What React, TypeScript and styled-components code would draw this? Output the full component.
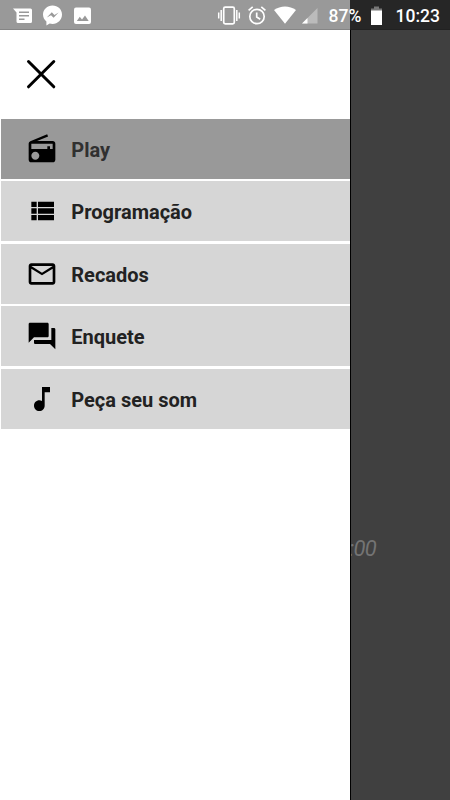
import React from "react";
import styled, { createGlobalStyle } from "styled-components";

const GlobalStyle = createGlobalStyle`
  * { box-sizing: border-box; }
  body { margin: 0; background: #404040; font-family: Roboto, "Liberation Sans", sans-serif; }
`;

const Screen = styled.div`
  display: flex;
  flex-direction: column;
  width: 450px;
  height: 800px;
  overflow: hidden;
  background: #404040;
`;

const StatusBar = styled.header`
  display: flex;
  justify-content: space-between;
  flex: none;
  height: 30px;
  padding: 0 10px 0 12px;
  color: #fff;
  background: linear-gradient(to right, #999 350px, #262626 350px);
  box-shadow: inset 0 -1px rgba(0, 0, 0, 0.13);
`;

const StatusGroup = styled.div`
  display: flex;
  align-items: center;
  height: 31px;
`;

const StatusIcon = styled.svg<{ $w: number; $gap?: number }>`
  display: block;
  flex: none;
  width: ${(p) => p.$w}px;
  height: 24px;
  margin-right: ${(p) => p.$gap ?? 0}px;
  overflow: visible;
`;

const StatusText = styled.span<{ $w: number; $gap?: number }>`
  width: ${(p) => p.$w}px;
  margin-right: ${(p) => p.$gap ?? 0}px;
  font-size: 17.5px;
  font-weight: 500;
  line-height: 30px;
  white-space: nowrap;
`;

const Body = styled.div`
  display: flex;
  flex: 1;
`;

const Drawer = styled.aside`
  flex: 0 0 350px;
  background: #fff;
`;

const DrawerHeader = styled.div`
  height: 88.8px;
  padding: 29px 0 0 26px;
`;

const CloseButton = styled.button`
  display: block;
  padding: 0;
  border: 0;
  background: none;
  svg { display: block; }
`;

const Menu = styled.nav`
  display: flex;
  flex-direction: column;
  gap: 2.5px;
  padding-left: 1.3px;
`;

const MenuItem = styled.a<{ $active?: boolean }>`
  display: flex;
  align-items: center;
  gap: 13px;
  height: 60px;
  padding-left: 25px;
  font-size: 20px;
  font-weight: 700;
  color: ${(p) => (p.$active ? "#303030" : "#222")};
  background: ${(p) => (p.$active ? "#999" : "#d6d6d6")};
`;

const MenuIcon = styled.svg`
  display: block;
  width: 32px;
  height: 32px;
  fill: #000;
`;

const Label = styled.span`
  padding-top: 2px;
`;

const Backdrop = styled.main`
  flex: 1;
  padding-top: 505px;
  border-left: 1px solid #000;
  overflow: hidden;
`;

const Time = styled.div`
  margin-left: -2px;
  font-size: 22px;
  font-style: italic;
  font-weight: 400;
  letter-spacing: -0.7px;
  line-height: 28px;
  color: #747474;
`;

const items = [
  {
    label: "Play",
    active: true,
    path: "M3.24 6.15C2.51 6.43 2 7.17 2 8v12c0 1.1.89 2 2 2h16c1.11 0 2-.9 2-2V8c0-1.11-.89-2-2-2H8.3l8.26-3.34L15.88 1 3.24 6.15zM7 20c-1.66 0-3-1.34-3-3s1.34-3 3-3 3 1.34 3 3-1.34 3-3 3zm13-8h-2v-2h-2v2H4V8h16v4z",
  },
  {
    label: "Programação",
    path: "M4 14h4v-4H4v4zm0 5h4v-4H4v4zM4 9h4V5H4v4zm5 5h12v-4H9v4zm0 5h12v-4H9v4zM9 5v4h12V5H9z",
  },
  {
    label: "Recados",
    path: "M20 4H4c-1.1 0-1.99.9-1.99 2L2 18c0 1.1.9 2 2 2h16c1.1 0 2-.9 2-2V6c0-1.1-.9-2-2-2zm0 14H4V8l8 5 8-5v10zm-8-7L4 6h16l-8 5z",
  },
  {
    label: "Enquete",
    path: "M21 6h-2v9H6v2c0 .55.45 1 1 1h11l4 4V7c0-.55-.45-1-1-1zm-4 6V3c0-.55-.45-1-1-1H3c-.55 0-1 .45-1 1v14l4-4h10c.55 0 1-.45 1-1z",
  },
  {
    label: "Peça seu som",
    path: "M12 3v10.55c-.59-.34-1.27-.55-2-.55-2.21 0-4 1.79-4 4s1.79 4 4 4 4-1.79 4-4V7h4V3h-6z",
  },
];

function Notifications() {
  return (
    <StatusGroup>
      <StatusIcon $w={20} $gap={11} viewBox="0 0 20 24" fill="#fff">
        <path fillRule="evenodd" d="M1 4.5h17.5Q20 4.5 20 6v11.500q0 1.500-1.500 1.500H6q-1.500 0-1.500-1.500V8.500zM7 7.500v1.500h10V7.500zm0 3.500v1.500h10V11zm0 3.500V16h5.500v-1.500z" />
      </StatusIcon>
      <StatusIcon $w={19} $gap={12} viewBox="0 0 19 24">
        <path fill="#fff" d="M9.500 1.500C4.200 1.500 0 5.500 0 10.500c0 2.900 1.300 5.300 3.400 7v4l3.300-1.900c.9.200 1.800.3 2.800.3 5.300 0 9.500-4.200 9.500-9.400S14.800 1.500 9.500 1.500z" />
        <path fill="#999" d="M3.800 13.500l5-5.300 2.600 2.700 4.200-2.400-5 5.300L8 11.200z" />
      </StatusIcon>
      <StatusIcon $w={17} viewBox="0 0 17 24">
        <rect y="3.500" width="17" height="16.500" rx="2" fill="#fff" />
        <path fill="#999" d="M2.800 17l3-4.300 2.200 2.800 3-4 3.700 5.500z" />
      </StatusIcon>
    </StatusGroup>
  );
}

function SystemStatus() {
  return (
    <StatusGroup>
      <StatusIcon $w={22} $gap={8} viewBox="0 0 22 24" fill="none" stroke="#fff" strokeWidth="1.500">
        <rect x="5.700" y="3.200" width="10.600" height="16.600" rx="1.500" strokeWidth="1.700" />
        <path d="M3.200 6v11M.7 8.500v6M18.800 6v11M21.300 8.500v6" />
      </StatusIcon>
      <StatusIcon $w={18} $gap={8} viewBox="0 0 18 24" fill="none" stroke="#fff" strokeWidth="1.700">
        <circle cx="9" cy="12.500" r="7.200" />
        <path d="M8.700 8.500V13l3.500 2.200M.6 6.300l4.100-3.400M17.400 6.300l-4.100-3.400" />
      </StatusIcon>
      <StatusIcon $w={22} $gap={6} viewBox="0 0 22 24" fill="#fff">
        <path d="M0 6C6.500 1.300 15.500 1.300 22 6L11 19.800z" />
      </StatusIcon>
      <StatusIcon $w={16} $gap={10.500} viewBox="0 0 16 24">
        <path fill="#bbb" d="M15.500 4v15.500H0z" />
        <path fill="#fff" d="M5.500 14v5.500H0z" />
      </StatusIcon>
      <StatusText $w={33} $gap={9}>87%</StatusText>
      <StatusIcon $w={11} $gap={14} viewBox="0 0 11 24">
        <path fill="#777" d="M3 2.500h5v2h3v2.500H0V4.500h3z" />
        <path fill="#fff" d="M0 6.500h11V21H0z" />
      </StatusIcon>
      <StatusText $w={44.5}>10:23</StatusText>
    </StatusGroup>
  );
}

export default function App() {
  return (
    <Screen>
      <GlobalStyle />
      <StatusBar>
        <Notifications />
        <SystemStatus />
      </StatusBar>
      <Body>
        <Drawer>
          <DrawerHeader>
            <CloseButton aria-label="Fechar">
              <svg width="30" height="30" viewBox="0 0 30 30" fill="none" stroke="#000" strokeWidth="3" strokeLinecap="round">
                <path d="M2.500 2.500l25.300 25.300M27.800 2.500L2.500 27.800" />
              </svg>
            </CloseButton>
          </DrawerHeader>
          <Menu>
            {items.map((item) => (
              <MenuItem key={item.label} $active={item.active}>
                <MenuIcon viewBox="0 0 24 24">
                  <path d={item.path} />
                </MenuIcon>
                <Label>{item.label}</Label>
              </MenuItem>
            ))}
          </Menu>
        </Drawer>
        <Backdrop>
          <Time>:00</Time>
        </Backdrop>
      </Body>
    </Screen>
  );
}
